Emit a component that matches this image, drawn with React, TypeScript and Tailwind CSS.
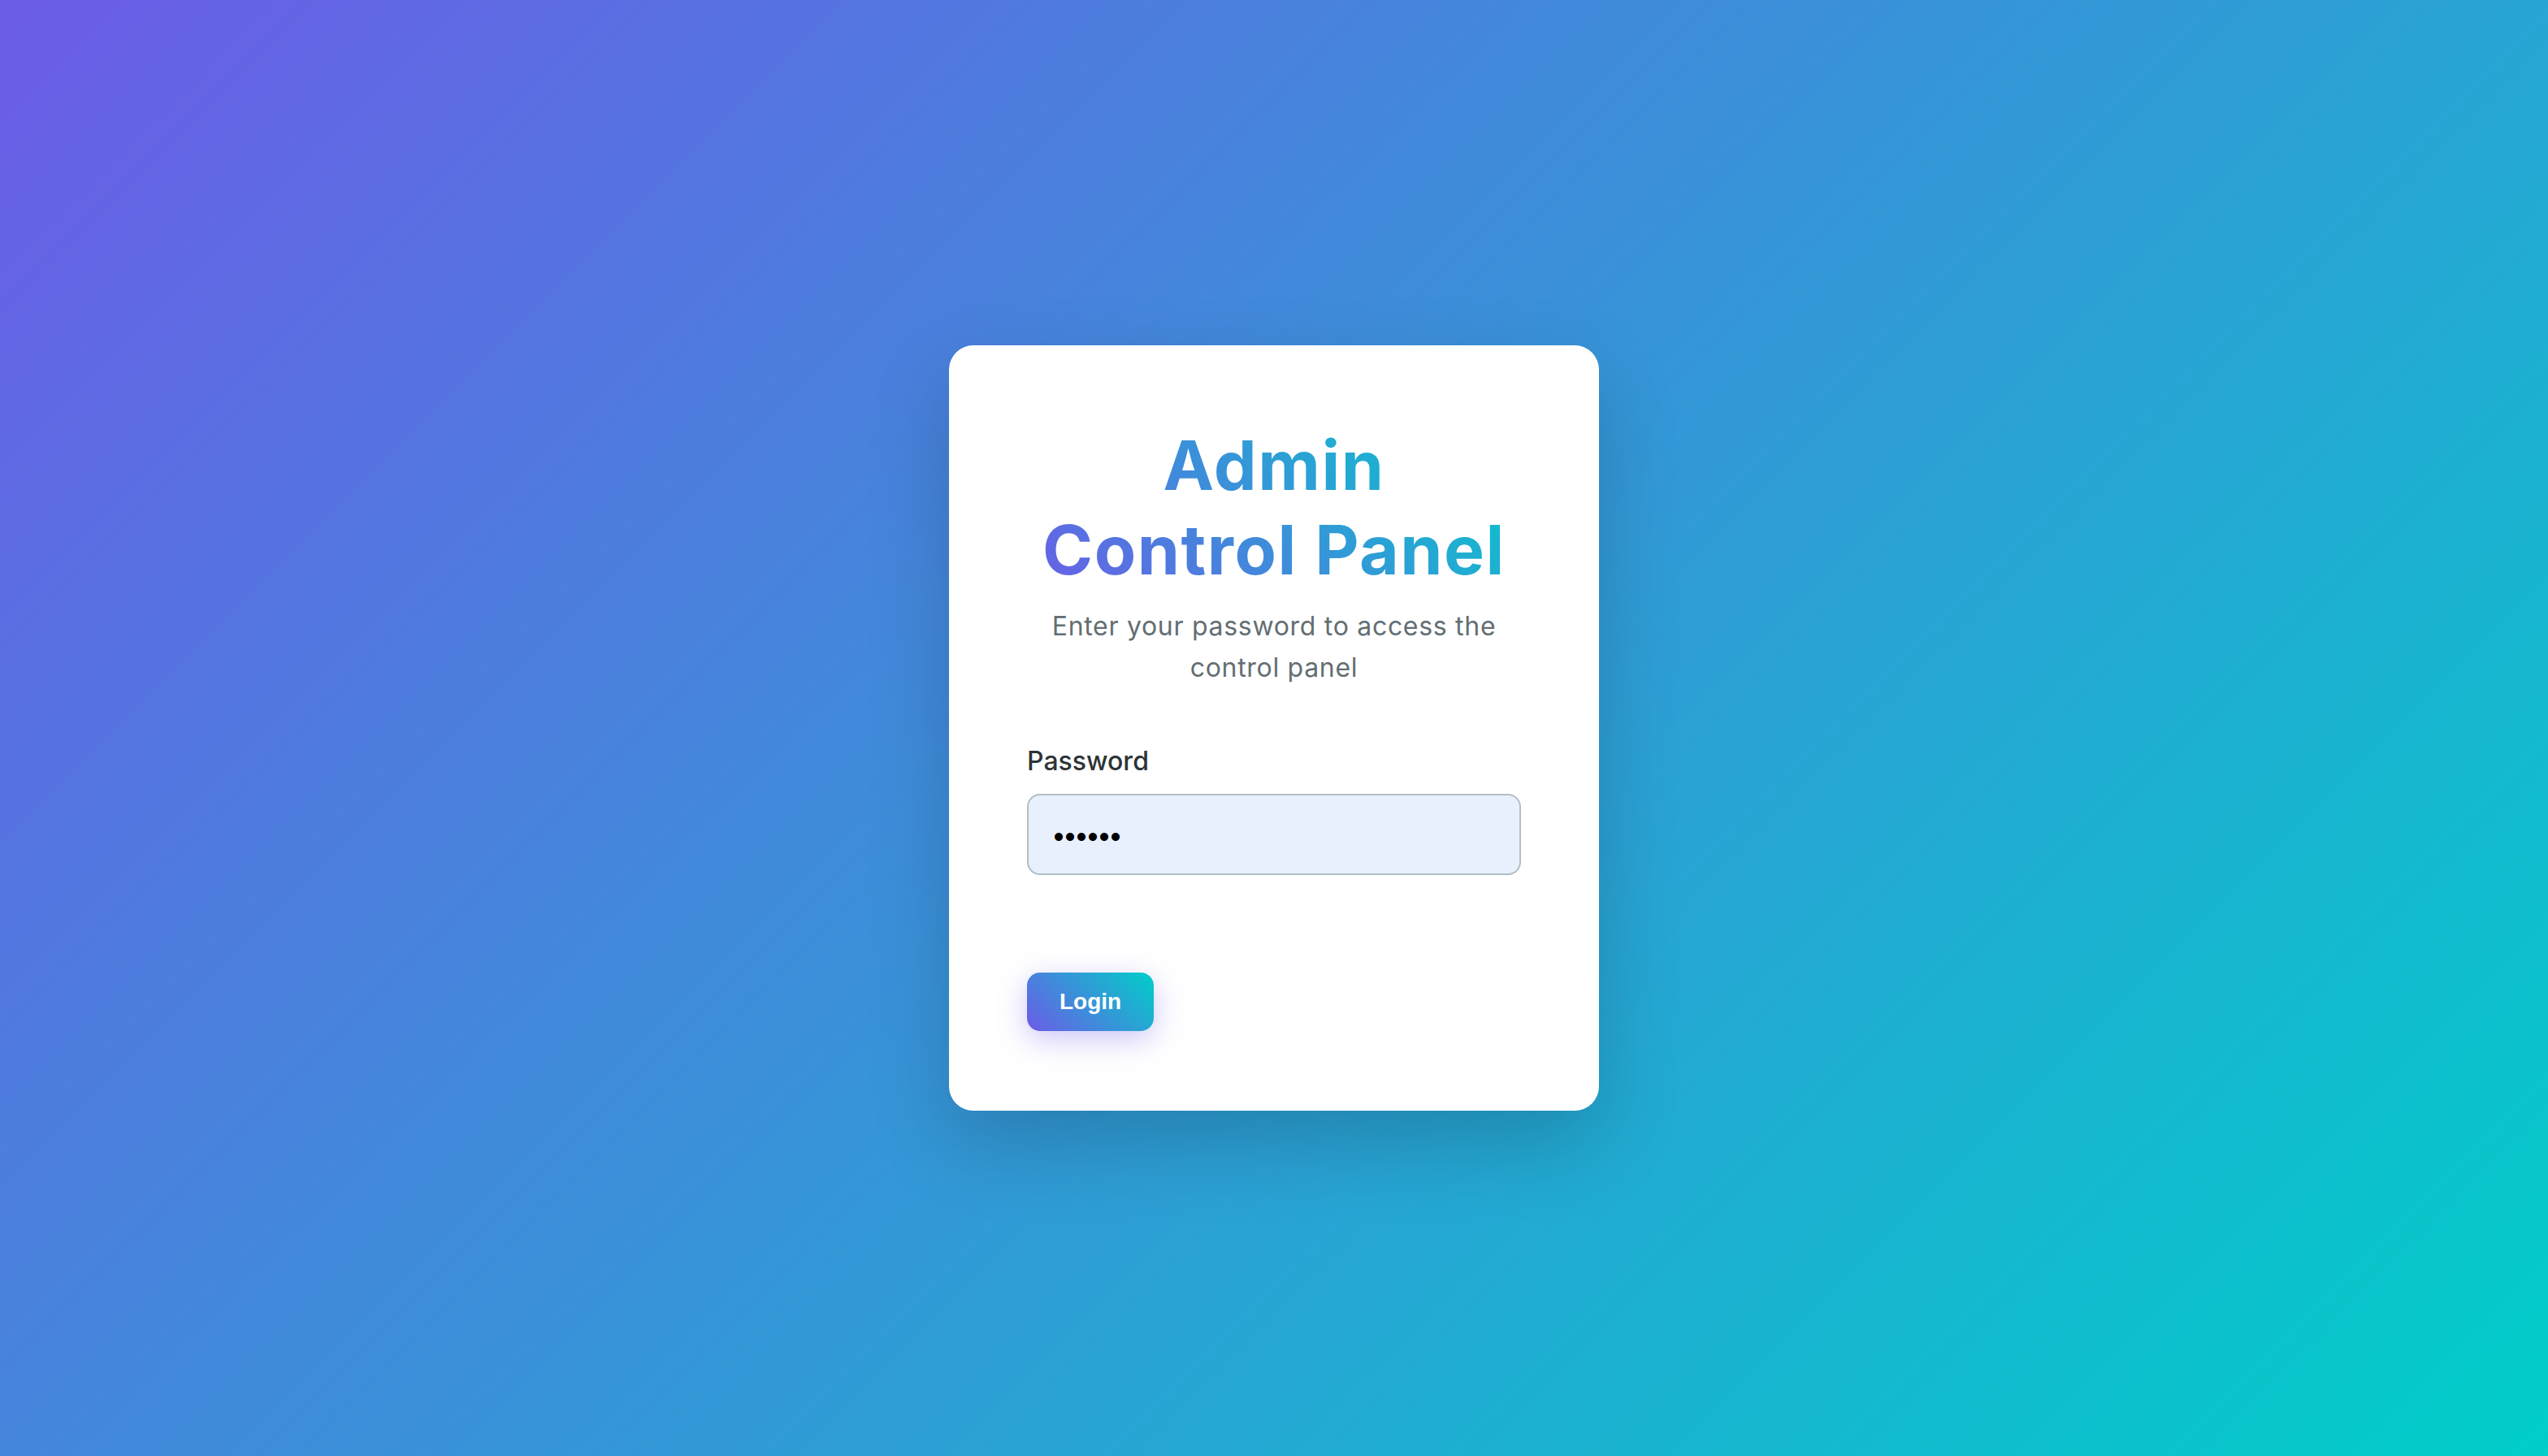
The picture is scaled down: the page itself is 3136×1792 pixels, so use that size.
import React from "react";

export default function App() {
  return (
    <div className="min-h-screen w-full flex items-center justify-center bg-[linear-gradient(135deg,#6c5ce7_0%,#00cec9_100%)] font-['Inter','Noto_Sans',sans-serif]">
      <div className="w-[800px] bg-white rounded-[30px] px-[96px] pt-[96px] pb-[98px] shadow-[0_40px_100px_rgba(0,0,0,0.18)]">
        <h1 className="text-center text-[84px] leading-[104px] font-bold tracking-[1.5px] bg-[linear-gradient(45deg,#6c5ce7_0%,#00cec9_100%)] bg-clip-text text-transparent">
          Admin
          <br />
          Control Panel
        </h1>
        <p className="mt-[16px] text-center text-[32px] leading-[51px] tracking-[0.7px] text-[#636e72] font-normal">
          Enter your password to access the
          <br />
          control panel
        </p>
        <div className="mt-[66px]">
          <label className="block text-[32px] leading-[48px] font-medium text-[#2d3436]">
            Password
          </label>
          <input
            type="password"
            readOnly
            value="123456"
            className="mt-[16px] block w-full h-[100px] rounded-[16px] border-2 border-[#b2bec3] bg-[#e8f0fe] px-[28px] text-[32px] tracking-[-4px] text-black outline-none"
          />
        </div>
        <button className="mt-[120px] block rounded-[16px] px-[40px] py-[20px] text-[28px] leading-[32px] font-bold text-white font-['Liberation_Sans',Arial,sans-serif] bg-[linear-gradient(45deg,#6c5ce7_0%,#00cec9_100%)] shadow-[0_10px_36px_rgba(108,92,231,0.35)]">
          Login
        </button>
      </div>
    </div>
  );
}
